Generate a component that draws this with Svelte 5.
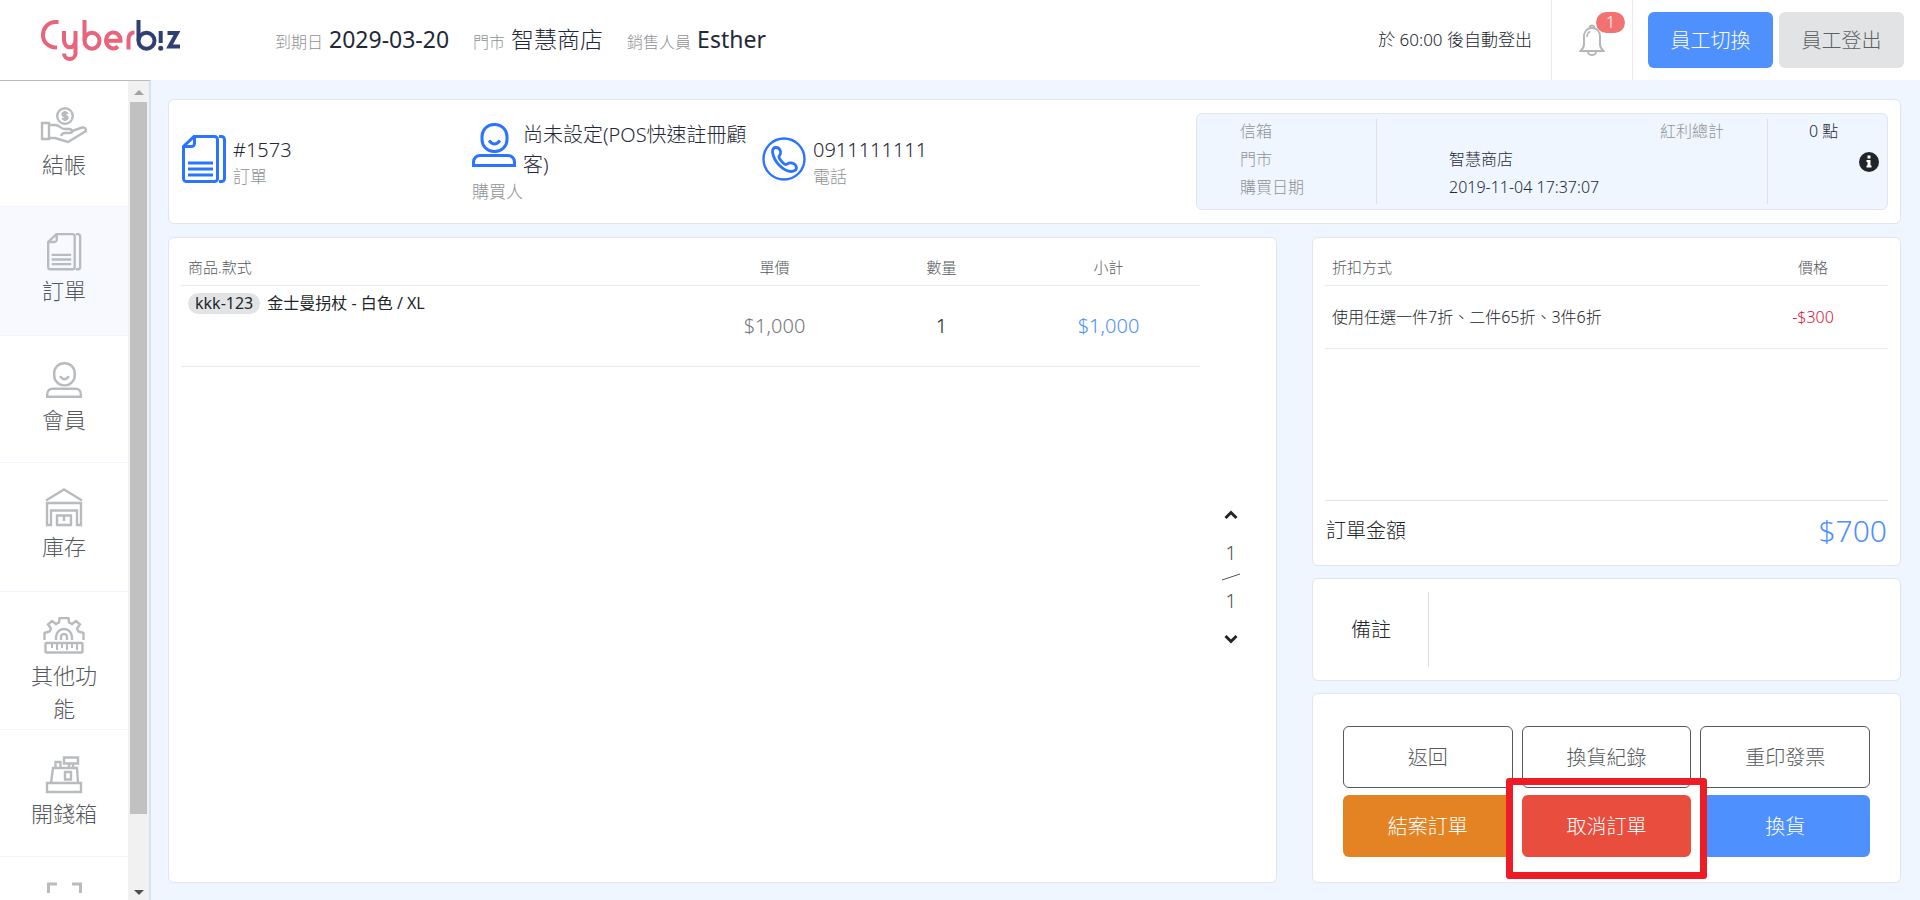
<script lang="ts">
type Icon = 'cash' | 'order' | 'member' | 'stock' | 'tools' | 'register' | 'scan';
const menu: { label: string; icon: Icon; tall: number }[] = [
	{ label: '結帳', icon: 'cash', tall: 126 },
	{ label: '訂單', icon: 'order', tall: 129 },
	{ label: '會員', icon: 'member', tall: 127 },
	{ label: '庫存', icon: 'stock', tall: 129 },
	{ label: '其他功能', icon: 'tools', tall: 138 },
	{ label: '開錢箱', icon: 'register', tall: 127 },
	{ label: '', icon: 'scan', tall: 127 },
];
const current = 'order';

const items = [{ sku: 'kkk-123', name: '金士曼拐杖 - 白色 / XL', price: '$1,000', qty: 1, subtotal: '$1,000' }];
const discounts = [{ name: '使用任選一件7折、二件65折、3件6折', price: '-$300' }];
</script>

{#snippet orderIcon()}
	<path d="M12 1.500H32.500a3 3 0 0 1 3 3V43.500a3 3 0 0 1-3 3H4.500a3 3 0 0 1-3-3V11.500ZM12.500 2v6.500a3 3 0 0 1-3 3H2M37 1.500h2.500a3 3 0 0 1 3 3V43.500a3 3 0 0 1-3 3H37M6 28H31M6 34H31M6 40H31" />
{/snippet}

{#snippet personIcon()}
	<rect x="10" y="1.5" width="25" height="27" rx="12" />
	<path d="M17 17.500q5.500 7 11 0M1.500 42.500V39a6.500 6.500 0 0 1 6.500-6.500H36a6.500 6.500 0 0 1 6.500 6.500V42.500Z" />
{/snippet}

<div class="page">
	<header>
		<a class="logo" href="/" aria-label="Cyberbiz">
			<svg width="142" height="44" viewBox="0 0 142 44" fill="none" stroke-width="4">
				<g stroke="#e9637a">
					<path d="M18.500 4H16C8 4 3 10 3 17S8 29.500 17 29.500" />
					<path d="M24 13V22a5.500 7 0 0 0 11.500 0V13M35.500 20V35.500a5.700 5.500 0 0 1-11.500 0" />
					<path d="M44.500 2V22.500M88.500 31.500V22q0-7.500 6-7.500" />
					<ellipse cx="52" cy="22.700" rx="7.500" ry="8" />
					<path d="M66 22.700H80.500A7.200 8 0 1 0 78 28.500" />
				</g>
				<g stroke="#2f3f73">
					<path d="M98.500 2V22.500M120.700 13V25M127.500 15H137L129.500 28.500H140" />
					<ellipse cx="106.500" cy="22.700" rx="8" ry="8" />
					<circle cx="120.700" cy="30.300" r="2.500" fill="#2f3f73" stroke="none" />
				</g>
			</svg>
		</a>
		<dl class="facts">
			<div><dt>到期日</dt><dd>2029-03-20</dd></div>
			<div><dt>門市</dt><dd class="store">智慧商店</dd></div>
			<div><dt>銷售人員</dt><dd>Esther</dd></div>
		</dl>
		<p class="timeout">於 60:00 後自動登出</p>
		<button class="bell" aria-label="通知">
			<svg width="26" height="32" viewBox="0 0 26 32" fill="none" stroke="#b4b7ba" stroke-width="2">
				<path d="M10.500 4a2.500 2.500 0 0 1 5 0M13 4C7 4 5 9 5 13V20q0 4-3.500 7H24.500Q21 24 21 20V13C21 9 19 4 13 4ZM9 28a4 3 0 0 0 8 0" />
				<path d="M8 13q0-4 3-5.500" stroke-width="1.500" />
			</svg>
			<span class="badge">1</span>
		</button>
		<div class="staff">
			<button class="primary">員工切換</button>
			<button>員工登出</button>
		</div>
	</header>

	<div class="body">
		<aside>
			<nav>
				{#each menu as item (item.icon)}
					<a href="/" class:active={item.icon === current} aria-label={item.label || '掃描'} style="height: {item.tall}px">
						<svg width="48" height="40" viewBox="0 0 48 40" fill="none" stroke="#b9bcbf" stroke-width="2.400">
							{#if item.icon === 'cash'}
								<circle cx="25" cy="10" r="7.800" />
								<path d="M27.500 8Q27 6.500 25 6.500q-2.500 0-2.500 1.800t2.500 1.700t2.500 1.700t-2.500 1.800q-2 0-2.500-1.500M25 5V15M2 17H9V33H2ZM9 19H15q3 0 5 2t5 2H29q3 0 3 3q0 1-3 1H25q-3 0-4 3M32 25L42 21.500q4-.5 4 3.500L28 36L15 32H9" />
							{:else if item.icon === 'order'}
								<g transform="translate(7 1) scale(.78)" stroke-width="3">{@render orderIcon()}</g>
							{:else if item.icon === 'member'}
								<g transform="translate(6 1) scale(.82)" stroke-width="3">{@render personIcon()}</g>
							{:else if item.icon === 'stock'}
								<path d="M6 12.500L24 1.500L42 12.500M7 15H41V37H37V22.500H11V37H7ZM17 27.500H31V37H17ZM24 28V33" />
							{:else if item.icon === 'tools'}
								<path d="M4.500 23V16l5-1.500l1.500-3L8 7.500L12 4l4 3l3-1.500L19.500 1H28.500l.5 4.500L32 7l4-3L40 7.500L37 11.500L38.500 14.500L43.500 16V23M16 23V20a8 8 0 0 1 16 0V23M21 23V20a3 3 0 0 1 6 0V23" />
								<rect x="5.500" y="26" width="37" height="9.500" rx="1" />
								<path d="M12 27V31M17 27V33M22 27V31M27 27V33M32 27V31M37 27V33" stroke-width="2" />
							{:else if item.icon === 'register'}
								<path d="M7 28H41V37H7ZM11 28L13 13H37L38 28M15.500 13V7H20.500V13M24 2.500H38V8.500H24ZM29 9V13M33 9V13M25 17H31V24.500H25Z" />
							{:else}
								<path d="M8.500 11V2H17M32 2H40.500V11" stroke-width="3" />
							{/if}
						</svg>
						<span>{item.label}</span>
					</a>
				{/each}
			</nav>
			<div class="scroll" aria-hidden="true">
				<i class="up"></i>
				<div class="thumb"></div>
				<i class="down"></i>
			</div>
		</aside>

		<main>
			<section class="card summary">
				<div class="who">
					<svg width="44" height="48" viewBox="0 0 44 48" fill="none" stroke="#2b74ff" stroke-width="3">{@render orderIcon()}</svg>
					<div><strong>#1573</strong><small>訂單</small></div>
				</div>
				<div class="who buyer">
					<svg width="44" height="44" viewBox="0 0 44 44" fill="none" stroke="#2b74ff" stroke-width="3">{@render personIcon()}</svg>
					<strong>尚未設定(POS快速註冊顧客)</strong>
					<small>購買人</small>
				</div>
				<div class="who">
					<svg width="44" height="44" viewBox="0 0 44 44" fill="none" stroke="#2b74ff" stroke-width="2.400">
						<circle cx="22" cy="22" r="20.500" />
						<path d="M10.500 15q0-4.500 3.500-4.500q3.500 0 4.500 4q.5 2.500-1 4q-1.500 1.500 1 4.500q3 4 5 4.500q1.500 0 2.500-1t4-.5q4 1 4.500 4.500q0 3.500-5 4q-6 0-12-6T10.500 15Z" stroke-width="2.800" />
					</svg>
					<div><strong>0911111111</strong><small>電話</small></div>
				</div>
				<div class="info">
					<div class="keys"><span>信箱</span><span>門市</span><span>購買日期</span></div>
					<div class="vals"><span></span><span>智慧商店</span><span>2019-11-04 17:37:07</span></div>
					<div class="bonus"><span>紅利總計</span></div>
					<div class="points">
						<span>0 點</span>
						<button aria-label="說明">
							<svg width="20" height="20" viewBox="0 0 20 20"><circle cx="10" cy="10" r="10" fill="#212529" /><path d="M8.500 3.500h3V6.500h-3ZM7.500 8h4v5.500h1V15.500h-5V13.500h1V10h-1Z" fill="#fff" /></svg>
						</button>
					</div>
				</div>
			</section>

			<section class="card goods">
				<table>
					<thead>
						<tr><th class="name">商品.款式</th><th>單價</th><th>數量</th><th>小計</th></tr>
					</thead>
					<tbody>
						{#each items as item (item.sku)}
							<tr>
								<td class="name"><span class="sku">{item.sku}</span>{item.name}</td>
								<td class="price">{item.price}</td>
								<td>{item.qty}</td>
								<td class="sub">{item.subtotal}</td>
							</tr>
						{/each}
					</tbody>
				</table>
				<div class="pager">
					<button aria-label="上一頁"><svg width="14" height="10" viewBox="0 0 14 10" fill="none" stroke="#212529" stroke-width="3"><path d="M1.500 8L7 2.500L12.500 8" /></svg></button>
					<span>1</span>
					<svg width="20" height="8" viewBox="0 0 20 8" stroke="#555"><path d="M1 7L19 1" /></svg>
					<span>1</span>
					<button aria-label="下一頁"><svg width="14" height="10" viewBox="0 0 14 10" fill="none" stroke="#212529" stroke-width="3"><path d="M1.500 2L7 7.500L12.500 2" /></svg></button>
				</div>
			</section>

			<div class="side">
				<section class="card discount">
					<table>
						<thead>
							<tr><th class="name">折扣方式</th><th>價格</th></tr>
						</thead>
						<tbody>
							{#each discounts as d (d.name)}
								<tr><td class="name">{d.name}</td><td class="minus">{d.price}</td></tr>
							{/each}
						</tbody>
					</table>
					<div class="total"><span>訂單金額</span><b>$700</b></div>
				</section>
				<section class="card note">
					<label for="note">備註</label>
					<textarea id="note"></textarea>
				</section>
				<section class="card actions">
					<button>返回</button>
					<button>換貨紀錄</button>
					<button>重印發票</button>
					<button class="close">結案訂單</button>
					<div class="marked"><button class="cancel">取消訂單</button></div>
					<button class="exchange">換貨</button>
				</section>
			</div>
		</main>
	</div>
</div>

<style>
:global(body) {
	background: #eff6ff;
}

.page {
	height: 100vh;
	display: flex;
	flex-direction: column;
	overflow: hidden;
	color: #212529;
	font: 300 16px/28px 'Noto Sans', 'Noto Sans CJK TC', sans-serif;
}

.page :global(*) {
	box-sizing: border-box;
}

button {
	padding: 0;
	border: 0;
	background: none;
	color: inherit;
	font: inherit;
	cursor: pointer;
}

svg {
	display: block;
	flex: none;
}

header {
	height: 80px;
	flex: none;
	display: flex;
	align-items: center;
	background: #fff;
}

.logo {
	width: 275px;
	padding-left: 40px;
}

.facts {
	flex: 1;
	display: flex;
	gap: 24px;
	margin: 0;
}

.facts div {
	display: flex;
	align-items: baseline;
	gap: 6px;
}

dt {
	color: #8f9295;
}

dd {
	margin: 0;
	color: #1f2937;
	font-size: 23px;
	font-weight: 400;
}

.store {
	font-weight: 300;
}

.timeout {
	margin: 0 19px 0 0;
	font-size: 17px;
}

.bell {
	position: relative;
	width: 82px;
	height: 80px;
	display: flex;
	align-items: center;
	justify-content: center;
	border: solid #e9ecef;
	border-width: 0 1px;
}

.badge {
	position: absolute;
	top: 12px;
	right: 7px;
	width: 29px;
	height: 21px;
	border-radius: 11px;
	background: #f27272;
	color: #fff;
	line-height: 21px;
}

.staff {
	display: flex;
	gap: 6px;
	padding: 0 16px 0 15px;
}

.staff button {
	width: 125px;
	height: 56px;
	padding-top: 2px;
	border-radius: 6px;
	background: #e2e3e5;
	color: #5c5f63;
	font-size: 20px;
}

.staff .primary {
	background: #4d90fe;
	color: #fff;
}

.body {
	flex: 1;
	min-height: 0;
	display: flex;
}

aside {
	width: 151px;
	flex: none;
	display: flex;
	border-top: 1px solid #bbb;
	border-right: 2px solid #dbe1ec;
	background: #fff;
}

nav {
	flex: 1;
	overflow: hidden;
}

nav a {
	display: flex;
	flex-direction: column;
	align-items: center;
	gap: 2px;
	padding: 25px 24px 0;
	border-bottom: 1px solid #eff6ff;
	color: #55585c;
	font-size: 22px;
	line-height: 33px;
	text-align: center;
	text-decoration: none;
}

nav .active {
	background: #f7f9ff;
}

.scroll {
	width: 21px;
	display: flex;
	flex-direction: column;
	align-items: center;
	padding: 9px 0 5px;
	background: #f1f1f1;
}

.thumb {
	width: 17px;
	height: 712px;
	margin: 7px 0 auto;
	background: #c1c1c1;
}

.up,
.down {
	border: solid transparent;
	border-width: 0 5px;
}

.up {
	border-bottom: 5px solid #a3a3a3;
}

.down {
	border-top: 5px solid #505050;
}

main {
	flex: 1;
	min-width: 0;
	display: grid;
	grid-template: 125px 1fr / 1fr 589px;
	gap: 13px 35px;
	padding: 19px 19px 17px 17px;
}

.card {
	border: 1px solid #e2e5e9;
	border-radius: 6px;
	background: #fff;
}

.summary {
	grid-column: 1 / -1;
	display: flex;
	padding: 13px 12px 13px 13px;
}

.who {
	width: 290px;
	display: flex;
	align-items: center;
	gap: 7px;
}

.who svg {
	margin-bottom: 6px;
}

.buyer {
	display: grid;
	grid-template-columns: 44px 1fr;
	align-content: center;
	gap: 0 7px;
	padding-right: 8px;
}

.buyer svg {
	margin-bottom: 10px;
}

.buyer small {
	grid-column: 1 / -1;
	line-height: 24px;
}

strong {
	display: block;
	color: #1f2937;
	font-size: 20px;
	font-weight: 300;
	line-height: 30px;
}

small {
	display: block;
	color: #8f9295;
	font-size: 17px;
	line-height: 24px;
}

.info {
	width: 692px;
	margin-left: auto;
	display: flex;
	padding: 5px 0;
	border: 1px solid #e2e5e9;
	border-radius: 6px;
	background: #eff6ff;
	line-height: 24px;
}

.info span {
	display: block;
	min-height: 28px;
}

.keys {
	width: 180px;
	padding-left: 43px;
	border-right: 1px solid #dee2e6;
	color: #8f9295;
}

.vals {
	flex: 1;
	padding-left: 72px;
}

.bonus {
	width: 108px;
	border-right: 1px solid #dee2e6;
	color: #8f9295;
}

.points {
	width: 119px;
	padding: 0 8px 0 41px;
}

.vals,
.points {
	color: #1f2937;
}

.points button {
	display: block;
	margin: 5px 0 0 auto;
}

table {
	width: 100%;
	border-collapse: collapse;
	table-layout: fixed;
}

tr {
	border-bottom: 1px solid #e9ecef;
}

th {
	height: 35px;
	padding: 0;
	color: #55585c;
	font-size: 15px;
	font-weight: 300;
}

td {
	padding: 0;
	text-align: center;
}

.goods {
	display: flex;
	padding: 12px;
}

.goods table {
	flex: 1;
	align-self: flex-start;
}

.goods th {
	width: 167px;
}

.goods th,
.goods td {
	padding-right: 16px;
}

.goods td {
	height: 81px;
	font-size: 20px;
}

.name,
.goods .name {
	width: auto;
	padding: 0 0 0 7px;
	text-align: left;
}

.goods td.name {
	padding-top: 3px;
	font-size: 16px;
	font-weight: 400;
	vertical-align: top;
}

.sku {
	margin-right: 7px;
	padding: 0 7px;
	border-radius: 11px;
	background: #e2e3e5;
	line-height: 21px;
	display: inline-block;
}

.price {
	color: #75787b;
}

.goods .sub {
	color: #4d90fe;
}

.pager {
	width: 62px;
	margin-right: 2px;
	display: flex;
	flex-direction: column;
	align-items: center;
	justify-content: center;
	gap: 6px;
	padding-top: 34px;
	color: #55585c;
	font-size: 20px;
}

.pager button:first-child {
	margin-bottom: 13px;
}

.pager button:last-child {
	margin-top: 13px;
}

.side {
	display: flex;
	flex-direction: column;
	gap: 12px;
}

.discount {
	flex: 1;
	display: flex;
	flex-direction: column;
	padding: 12px 12px 0;
}

.discount th:last-child {
	width: 150px;
}

.discount td {
	height: 63px;
}

td.minus {
	color: #dc143c;
}

.total {
	height: 65px;
	margin-top: auto;
	display: flex;
	align-items: center;
	justify-content: space-between;
	padding: 0 1px 5px;
	border-top: 1px solid #dee2e6;
	font-size: 20px;
}

.total b {
	color: #4d90fe;
	font-size: 30px;
	font-weight: 300;
}

.note {
	height: 103px;
	display: flex;
	padding: 13px;
}

.note label {
	width: 103px;
	display: flex;
	align-items: center;
	justify-content: center;
	padding-right: 12px;
	border-right: 1px solid #dee2e6;
	font-size: 20px;
}

.note textarea {
	flex: 1;
	border: 0;
	resize: none;
	font: inherit;
}

.actions {
	height: 190px;
	display: grid;
	grid-template-columns: repeat(3, 1fr);
	grid-auto-rows: 62px;
	align-content: center;
	gap: 7px 9px;
	padding: 6px 30px 0;
}

.actions button {
	width: 100%;
	height: 62px;
	padding-top: 2px;
	border: 1px solid #55585c;
	border-radius: 6px;
	color: #55585c;
	font-size: 20px;
}

.actions .close,
.actions .cancel,
.actions .exchange {
	border: 0;
	color: #fff;
}

.actions .close {
	background: #e48323;
}

.actions .cancel {
	background: #e94d3e;
}

.actions .exchange {
	background: #4d90fe;
}

.marked {
	position: relative;
}

.marked::after {
	content: '';
	position: absolute;
	inset: -17px -16px -22px;
	border: 7px solid #ee1c24;
	border-radius: 3px;
	pointer-events: none;
}
</style>
